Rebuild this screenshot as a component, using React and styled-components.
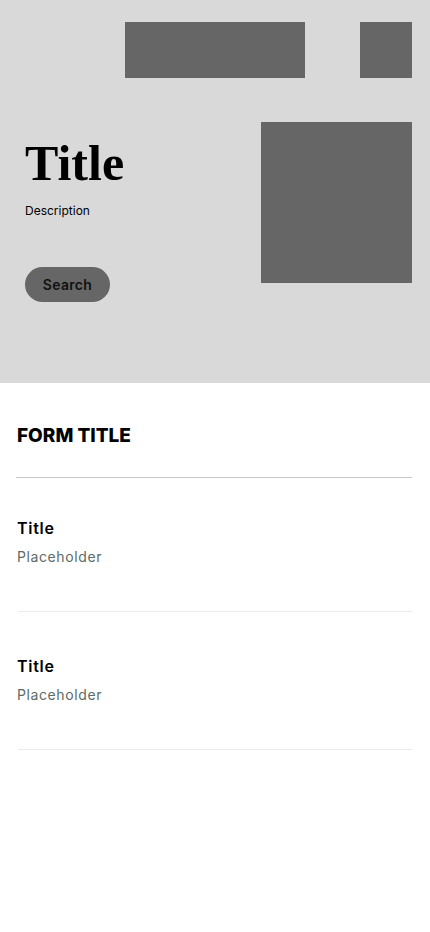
import React from 'react'
import styled, { createGlobalStyle } from 'styled-components'

const GlobalStyle = createGlobalStyle`
  body {
    margin: 0;
    background: #fff;
    font-family: Inter, "Liberation Sans", sans-serif;
  }
`

const fields = [
  { id: 1, title: 'Title', placeholder: 'Placeholder' },
  { id: 2, title: 'Title', placeholder: 'Placeholder' },
]

function App() {
  return (
    <Page>
      <GlobalStyle />
      <Hero>
        <TopBar>
          <Block w={180} h={56} />
          <Block w={52} h={56} />
        </TopBar>
        <HeroBody>
          <HeroText>
            <HeroTitle>Title</HeroTitle>
            <Description>Description</Description>
            <SearchButton type="button">Search</SearchButton>
          </HeroText>
          <Block w={151} h={161} />
        </HeroBody>
      </Hero>
      <Form>
        <FormTitle>FORM TITLE</FormTitle>
        {fields.map(field => (
          <Field key={field.id}>
            <FieldTitle>{field.title}</FieldTitle>
            <FieldInput placeholder={field.placeholder} />
          </Field>
        ))}
      </Form>
    </Page>
  )
}

export default App

const Page = styled.div`
  width: 430px;
  min-height: 932px;
  background: #fff;
`

const Hero = styled.header`
  height: 383px;
  box-sizing: border-box;
  background: #d9d9d9;
  padding: 22px 18px 0 25px;
`

const TopBar = styled.div`
  display: flex;
  justify-content: flex-end;
  gap: 55px;
`

const Block = styled.div`
  width: ${p => p.w}px;
  height: ${p => p.h}px;
  background: #666666;
  flex-shrink: 0;
`

const HeroBody = styled.div`
  display: flex;
  justify-content: space-between;
  margin-top: 44px;
`

const HeroText = styled.div`
  display: flex;
  flex-direction: column;
  align-items: flex-start;
  padding-top: 11px;
`

const HeroTitle = styled.h1`
  margin: 0;
  font-family: "Liberation Serif", serif;
  font-weight: 700;
  font-size: 50px;
  line-height: 60px;
  color: #000;
`

const Description = styled.p`
  margin: 10px 0 0;
  font-size: 12px;
  line-height: 16px;
  color: #000;
`

const SearchButton = styled.button`
  margin-top: 48px;
  width: 85px;
  height: 35px;
  border: none;
  border-radius: 17.5px;
  background: #666666;
  color: #111;
  font-family: Inter, sans-serif;
  font-weight: 600;
  font-size: 14px;
  letter-spacing: 0.3px;
  padding: 0;
`

const Form = styled.section`
  padding: 0 18px 0 16px;
`

const FormTitle = styled.h2`
  margin: 0;
  padding: 40px 1px 28px;
  font-size: 19px;
  line-height: 26px;
  font-weight: 800;
  letter-spacing: 0;
  color: #000;
  border-bottom: 1px solid #c8c8c8;
`

const Field = styled.div`
  display: flex;
  flex-direction: column;
  margin: 0 -1px 0 2px;
  padding: 44px 0 44px;
  border-bottom: 1px solid #ececec;

  &:first-of-type {
    padding-top: 40px;
  }
`

const FieldTitle = styled.label`
  margin-left: -1px;
  font-size: 16px;
  line-height: 20px;
  font-weight: 600;
  letter-spacing: 0.7px;
  color: #000;
`

const FieldInput = styled.input`
  margin: 9px 0 0 -1px;
  padding: 0;
  border: none;
  outline: none;
  background: transparent;
  font-family: Inter, sans-serif;
  font-size: 14px;
  line-height: 20px;
  letter-spacing: 0.6px;
  &::placeholder {
    color: #5b6b66;
  }
`
